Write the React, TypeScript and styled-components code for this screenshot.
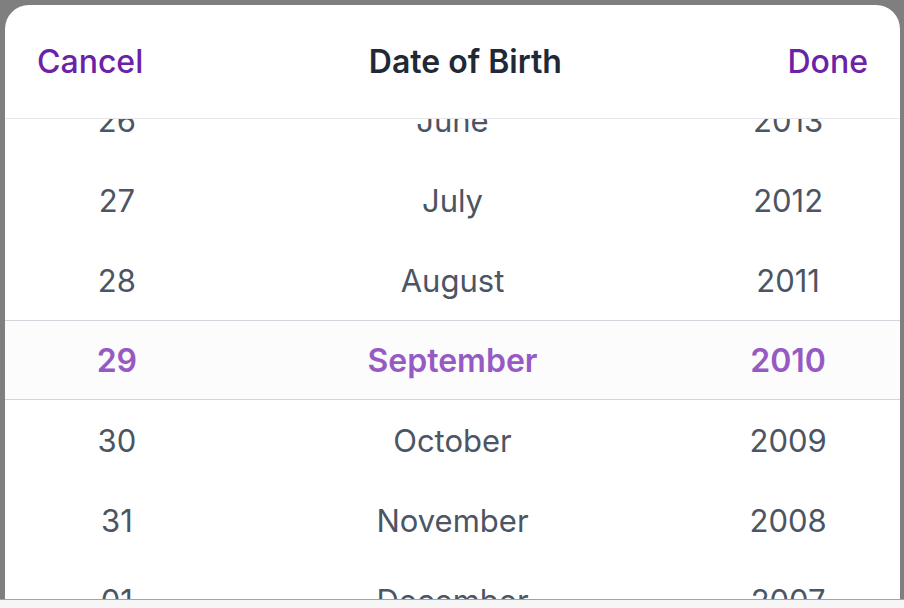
import styled, { createGlobalStyle } from 'styled-components';

const GlobalStyle = createGlobalStyle`
  html, body {
    margin: 0;
    padding: 0;
    background: #f6f6f6;
  }
  body {
    font-family: Inter, "Noto Sans", sans-serif;
    -webkit-font-smoothing: antialiased;
  }
`

const Screen = styled.div`
  width: 904px;
  height: 608px;
  display: flex;
  flex-direction: column;
  overflow: hidden;
`

const Backdrop = styled.div`
  flex: 1;
  min-height: 0;
  display: flex;
  background: #7f7f7f;
  padding: 5px 4px 0 5px;
`

const Sheet = styled.div`
  flex: 1;
  display: flex;
  flex-direction: column;
  background: #ffffff;
  border-radius: 24px 24px 0 0;
  overflow: hidden;
`

const Header = styled.div`
  height: 113px;
  flex-shrink: 0;
  display: flex;
  align-items: center;
  justify-content: space-between;
  padding: 0 32px;
  border-bottom: 1px solid #e5e7eb;
`

const HeaderButton = styled.button`
  border: none;
  background: none;
  padding: 0;
  font-family: inherit;
  font-size: 32px;
  font-weight: 500;
  color: #6b21a8;
  cursor: pointer;
`

const Title = styled.h2`
  margin: 0;
  font-size: 32px;
  font-weight: 600;
  color: #1f2937;
`

const Picker = styled.div`
  flex: 1;
  min-height: 0;
  overflow: hidden;
  display: flex;
`

const Wheel = styled.div<{ $grow: number }>`
  flex: ${p => p.$grow};
  display: flex;
  flex-direction: column;
  margin-top: -39px;
`

const Cell = styled.div<{ $selected?: boolean }>`
  height: 80px;
  flex-shrink: 0;
  box-sizing: border-box;
  display: flex;
  align-items: center;
  justify-content: center;
  font-size: ${p => (p.$selected ? 32 : 31)}px;
  font-weight: ${p => (p.$selected ? 600 : 400)};
  color: ${p => (p.$selected ? '#975ac4' : '#4b5563')};
  background: ${p => (p.$selected ? '#fbfcfb' : 'transparent')};
  border-top: 1px solid ${p => (p.$selected ? '#d1d5db' : 'transparent')};
  border-bottom: 1px solid ${p => (p.$selected ? '#d1d5db' : 'transparent')};
`

const BottomBar = styled.div`
  height: 8px;
  flex-shrink: 0;
  background: #f6f6f6;
  border-top: 1px solid #a3a3a3;
`

const days = ['26', '27', '28', '29', '30', '31', '01']
const months = ['June', 'July', 'August', 'September', 'October', 'November', 'December']
const years = ['2013', '2012', '2011', '2010', '2009', '2008', '2007']
const selectedIndex = 3

function WheelColumn({ items, grow }: { items: string[]; grow: number }) {
  return (
    <Wheel $grow={grow}>
      {items.map((item, i) => (
        <Cell key={item} $selected={i === selectedIndex}>{item}</Cell>
      ))}
    </Wheel>
  )
}

export default function App() {
  return (
    <Screen>
      <GlobalStyle />
      <Backdrop>
        <Sheet>
          <Header>
            <HeaderButton>Cancel</HeaderButton>
            <Title>Date of Birth</Title>
            <HeaderButton>Done</HeaderButton>
          </Header>
          <Picker>
            <WheelColumn items={days} grow={1} />
            <WheelColumn items={months} grow={2} />
            <WheelColumn items={years} grow={1} />
          </Picker>
        </Sheet>
      </Backdrop>
      <BottomBar />
    </Screen>
  )
}
